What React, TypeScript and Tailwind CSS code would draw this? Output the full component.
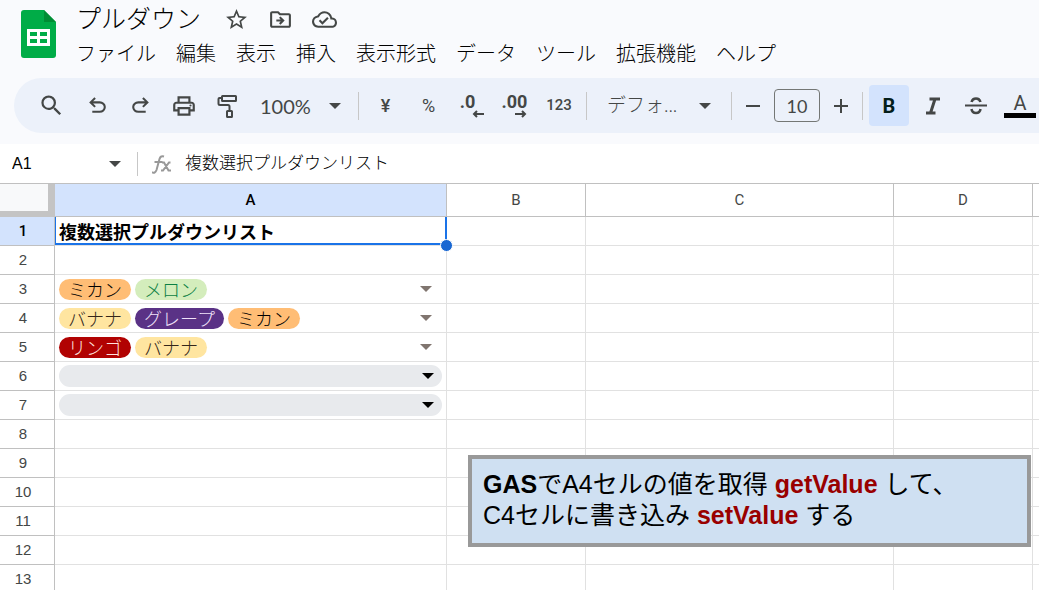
import { useState } from 'react'
import type { ReactNode } from 'react'
import { MdStarBorder, MdOutlineDriveFileMove, MdOutlineCloudDone, MdSearch, MdOutlinePrint } from 'react-icons/md'

const MENUS = ['ファイル', '編集', '表示', '挿入', '表示形式', 'データ', 'ツール', '拡張機能', 'ヘルプ']
const COLUMNS = ['A', 'B', 'C', 'D', '']
const ROWS = Array.from({ length: 13 }, (_, i) => i + 1)

const CHIP_COLORS: Record<string, string> = {
  ミカン: 'bg-[#ffbd75] text-black',
  メロン: 'bg-[#d4edbc] text-[#0b8043]',
  バナナ: 'bg-[#ffe5a0] text-[#33261a]',
  グレープ: 'bg-[#5a3286] text-[#f0e2fa]',
  リンゴ: 'bg-[#b10202] text-[#ffe3df]',
}

const CHIPS: Record<number, string[]> = {
  3: ['ミカン', 'メロン'],
  4: ['バナナ', 'グレープ', 'ミカン'],
  5: ['リンゴ', 'バナナ'],
}

function Caret({ className = '' }: { className?: string }) {
  return <svg viewBox="0 0 12 6" className={`w-3 h-[6px] pointer-events-none ${className}`} fill="currentColor"><path d="M0 0h12L6 6z" /></svg>
}

function Divider() {
  return <span className="w-px h-7 bg-[#c7c7c7] shrink-0" />
}

function ToolButton({ label, className = 'w-[43px]', children }: { label: string; className?: string; children: ReactNode }) {
  return <button aria-label={label} className={`h-[41px] flex items-center justify-center shrink-0 rounded ${className}`}>{children}</button>
}

function SheetsLogo() {
  return (
    <svg viewBox="0 0 35 48" className="w-[35px] h-12 shrink-0">
      <path d="M3 0h20l12 12v33a3 3 0 0 1-3 3H3a3 3 0 0 1-3-3V3a3 3 0 0 1 3-3z" fill="#00ac47" />
      <path d="M23 0l12 12H23z" fill="#00832d" opacity=".75" />
      <path d="M6 19h23v17H6zM9 22v4h7v-4zM19 22v4h7v-4zM9 29v4h7v-4zM19 29v4h7v-4z" fill="#fff" fillRule="evenodd" />
    </svg>
  )
}

function Toolbar() {
  const [size, setSize] = useState(10)
  return (
    <div className="ml-[14px] h-[55px] pl-4 flex items-center rounded-l-full bg-[#ecf1fa] text-[#444746] overflow-hidden font-[Lato,'Noto_Sans_CJK_JP',sans-serif]">
      <ToolButton label="検索" className="w-[43px] mr-[3px]"><MdSearch size={27} /></ToolButton>
      <ToolButton label="元に戻す">
        <svg viewBox="0 -960 960 960" className="size-[25px]" fill="currentColor"><path d="M280-200v-80h284q63 0 109.500-40T720-420q0-60-46.500-100T564-560H312l104 104-56 56-200-200 200-200 56 56-104 104h252q97 0 166.500 63T800-420q0 94-69.500 157T564-200H280Z" /></svg>
      </ToolButton>
      <ToolButton label="やり直し">
        <svg viewBox="0 -960 960 960" className="size-[25px]" fill="currentColor"><path d="M396-200q-97 0-166.500-63T160-420q0-94 69.500-157T396-640h252L544-744l56-56 200 200-200 200-56-56 104-104H396q-63 0-109.500 40T240-420q0 60 46.500 100T396-280h284v80H396Z" /></svg>
      </ToolButton>
      <ToolButton label="印刷"><MdOutlinePrint size={26} /></ToolButton>
      <ToolButton label="書式を貼り付け">
        <svg viewBox="0 0 20 24" className="w-5 h-6" fill="none" stroke="currentColor" strokeWidth="2">
          <rect x="5" y="2" width="14" height="5" rx=".5" />
          <path d="M5 4H2.500Q1.500 4 1.500 5v4.500q0 1.500 1.500 1.500h8q1.500 0 1.500 1.500V17" />
          <rect x="10" y="17" width="5" height="6" rx=".5" />
        </svg>
      </ToolButton>
      <div className="w-[110px] shrink-0 grid items-center">
        <select aria-label="ズーム" className="col-start-1 row-start-1 w-full pl-3 text-xl appearance-none bg-transparent"><option>100%</option></select>
        <Caret className="col-start-1 row-start-1 justify-self-end mr-[17px]" />
      </div>
      <Divider />
      <ToolButton label="通貨" className="w-[43px] ml-[5px] text-lg"><span className="font-[Roboto,sans-serif] font-medium">¥</span></ToolButton>
      <ToolButton label="パーセント" className="w-[43px] text-lg font-[Roboto,sans-serif]">%</ToolButton>
      <ToolButton label="小数点以下の桁数を減らす" className="w-[43px] flex-col text-lg leading-4 font-[Roboto,sans-serif] font-bold">
        <span className="mr-2">.0</span>
        <svg viewBox="0 0 12 8" className="w-3 h-2 ml-3" fill="none" stroke="currentColor" strokeWidth="2"><path d="M12 4H2M5 1L2 4l3 3" /></svg>
      </ToolButton>
      <ToolButton label="小数点以下の桁数を増やす" className="w-[43px] flex-col text-lg leading-4 font-[Roboto,sans-serif] font-bold">
        <span>.00</span>
        <svg viewBox="0 0 12 8" className="w-3 h-2 ml-3" fill="none" stroke="currentColor" strokeWidth="2"><path d="M0 4h10M7 1l3 3-3 3" /></svg>
      </ToolButton>
      <ToolButton label="表示形式の詳細設定" className="w-[46px] mr-1 text-[15px] font-[Roboto,sans-serif]"><span className="font-medium">123</span></ToolButton>
      <Divider />
      <div className="w-[144px] shrink-0 grid items-center">
        <select aria-label="フォント" className="col-start-1 row-start-1 w-full pl-5 text-[19px] font-light appearance-none bg-transparent"><option>デフォ...</option></select>
        <Caret className="col-start-1 row-start-1 justify-self-end mr-5" />
      </div>
      <Divider />
      <ToolButton label="フォントサイズを縮小" className="w-[42px]">
        <svg viewBox="0 0 14 14" className="size-[14px]" stroke="currentColor" strokeWidth="2"><path d="M0 7h14" /></svg>
      </ToolButton>
      <input aria-label="フォントサイズ" value={size} onChange={(e) => setSize(Number(e.target.value) || 0)} className="w-[46px] h-[33px] shrink-0 border border-[#747775] rounded text-center text-lg bg-transparent" />
      <ToolButton label="フォントサイズを拡大" className="w-[42px]">
        <svg viewBox="0 0 14 14" className="size-[14px]" stroke="currentColor" strokeWidth="2"><path d="M0 7h14M7 0v14" /></svg>
      </ToolButton>
      <Divider />
      <ToolButton label="太字" className="w-10 mx-[6px] bg-[#d3e3fd] text-[#041e1a] text-xl font-[Roboto,sans-serif]"><b>B</b></ToolButton>
      <ToolButton label="斜体" className="w-[43px] -ml-1">
        <svg viewBox="0 0 16 18" className="w-4 h-[18px]" fill="none" stroke="currentColor" strokeWidth="3"><path d="M4.500 2H15M1 16h9.500M10 2L5.500 16" /></svg>
      </ToolButton>
      <ToolButton label="取り消し線">
        <svg viewBox="0 0 22 18" className="w-[22px] h-[18px]" fill="none" stroke="currentColor" strokeWidth="2.500">
          <path d="M0 8.500h22" strokeWidth="2" />
          <path d="M6.500 5Q7.500 1.500 11 1.500T15.500 5M6.500 12Q7 16 11 16T15.500 12" />
        </svg>
      </ToolButton>
      <ToolButton label="テキストの色" className="w-[46px] flex-col text-xl leading-5 font-[Roboto,sans-serif]">
        A
        <span className="w-8 h-[5px] bg-black" />
      </ToolButton>
    </div>
  )
}

function CellContent({ row }: { row: number }) {
  if (row === 1) {
    return (
      <>
        <div className="h-7 pl-1 text-lg leading-8 font-bold text-black whitespace-nowrap">複数選択プルダウンリスト</div>
        <span className="absolute inset-0 -right-px border-l border-r-2 border-b-2 border-[#1a73e8]" />
        <span className="absolute z-10 -right-[7px] -bottom-[7px] size-[13px] rounded-full border border-white bg-[#1967d2]" />
      </>
    )
  }
  if (CHIPS[row]) {
    return (
      <button className="w-full h-7 pl-1 pr-[14px] flex items-center gap-1 text-lg font-light">
        {CHIPS[row].map((name) => <span key={name} className={`h-[21px] px-[9px] leading-6 rounded-full ${CHIP_COLORS[name]}`}>{name}</span>)}
        <Caret className="ml-auto text-[#80756f]" />
      </button>
    )
  }
  if (row === 6 || row === 7) {
    return (
      <div className="h-7 px-1 grid items-center">
        <select aria-label={`A${row}`} className="col-start-1 row-start-1 w-full h-[22px] rounded-full bg-[#e8eaed] appearance-none"><option></option></select>
        <Caret className="col-start-1 row-start-1 justify-self-end mr-2 text-black" />
      </div>
    )
  }
  return null
}

export default function App() {
  const [formula, setFormula] = useState('複数選択プルダウンリスト')
  return (
    <div className="h-screen overflow-hidden bg-white text-black font-['Liberation_Sans','Noto_Sans_CJK_JP',sans-serif]">
      <header className="bg-[#f9fafd] pb-[11px]">
        <div className="flex items-start gap-5 h-[78px] pl-[21px]">
          <div className="pt-[10px]"><SheetsLogo /></div>
          <div className="flex-1 min-w-0">
            <div className="flex items-center h-[38px] gap-[19px] text-[#444746]">
              <h1 className="text-[25px] leading-[38px] font-light text-black pr-1">プルダウン</h1>
              <button aria-label="スター"><MdStarBorder size={25} /></button>
              <button aria-label="移動"><MdOutlineDriveFileMove size={25} /></button>
              <button aria-label="保存済み"><MdOutlineCloudDone size={25} /></button>
            </div>
            <nav className="flex gap-5 text-xl leading-8 font-light whitespace-nowrap">
              {MENUS.map((m) => <button key={m}>{m}</button>)}
            </nav>
          </div>
        </div>
        <Toolbar />
      </header>

      <div className="h-10 flex items-center border-b border-[#c0c0c0]">
        <input aria-label="名前ボックス" defaultValue="A1" className="w-[109px] pl-3 text-base outline-none" />
        <button aria-label="名前の一覧" className="w-7 text-[#444746]"><Caret /></button>
        <span className="w-px h-6 bg-[#c7c7c7]" />
        <svg viewBox="0 0 20 20" className="w-5 h-5 ml-[14px] mr-[13px]" fill="none" stroke="#999" strokeWidth="2">
          <path d="M0 18q3 2 4.500-2L7.500 5Q8.500 1.500 12 2.500M2.500 8h8" />
          <path d="M10 8.500h2l4.500 8h2.500M18.500 8.500h-1.500l-6 8H9" />
        </svg>
        <input aria-label="数式" value={formula} onChange={(e) => setFormula(e.target.value)} className="flex-1 min-w-0 text-[17px] font-light outline-none" />
      </div>

      <main className="relative">
        <table className="w-full table-fixed border-separate border-spacing-0">
          <colgroup>
            <col className="w-[55px]" />
            <col className="w-[392px]" />
            <col className="w-[139px]" />
            <col className="w-[308px]" />
            <col className="w-[139px]" />
            <col />
          </colgroup>
          <thead>
            <tr className="h-[33px] text-[15px] font-[Roboto,sans-serif]">
              <td className="p-0 border-r-[7px] border-b-[6px] border-[#c4c4c4] bg-[#f8f9fa]" />
              {COLUMNS.map((c, i) => (
                <th key={i} className={`p-0 border-r last:border-r-0 border-b border-[#c0c0c0] ${c === 'A' ? 'bg-[#d3e3fd] font-medium' : 'font-normal text-[#444746]'}`}>{c}</th>
              ))}
            </tr>
          </thead>
          <tbody>
            {ROWS.map((row) => (
              <tr key={row} className="h-[29px]">
                <th className={`p-0 pr-2 border-r border-b border-[#c0c0c0] text-[15px] leading-7 ${row === 1 ? 'bg-[#d3e3fd] font-[Roboto,sans-serif] font-medium' : 'font-normal text-[#444746]'}`}>{row}</th>
                {COLUMNS.map((c, i) => (
                  <td key={i} className="relative p-0 border-r last:border-r-0 border-b border-[#e1e1e1]">{c === 'A' && <CellContent row={row} />}</td>
                ))}
              </tr>
            ))}
          </tbody>
        </table>

        <p className="absolute top-[271px] right-2 w-[563px] h-[92px] border-4 border-[#999] bg-[#cfe0f2] pl-[11px] pt-[10px] text-[25px] leading-[31px] text-black whitespace-nowrap">
          <b>GAS</b>でA4セルの値を取得 <b className="text-[#990000]">getValue</b> して、<br />
          C4セルに書き込み <b className="text-[#990000]">setValue</b> する
        </p>
      </main>
    </div>
  )
}
